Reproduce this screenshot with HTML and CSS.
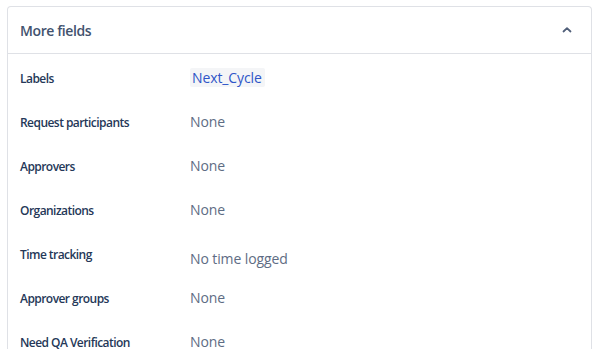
FILE: index.html
```html
<!DOCTYPE html>
<html>
<head>
<meta charset="utf-8">
<link rel="stylesheet" href="styles.css">
</head>
<body>
<div class="card">
  <div class="card-header">
    <span class="title">More fields</span>
    <svg class="chev" width="12" height="12" viewBox="0 0 12 12"><path d="M2.5 7.5 L6 4.2 L9.5 7.5" fill="none" stroke="#505f79" stroke-width="1.8" stroke-linecap="round" stroke-linejoin="round"/></svg>
  </div>
  <div class="fields">
    <div class="row"><div class="label">Labels</div><div class="value"><span class="tag">Next_Cycle</span></div></div>
    <div class="row"><div class="label">Request participants</div><div class="value">None</div></div>
    <div class="row"><div class="label">Approvers</div><div class="value">None</div></div>
    <div class="row"><div class="label">Organizations</div><div class="value">None</div></div>
    <div class="row"><div class="label">Time tracking</div><div class="value shifted">No time logged</div></div>
    <div class="row"><div class="label">Approver groups</div><div class="value">None</div></div>
    <div class="row"><div class="label">Need QA Verification</div><div class="value">None</div></div>
  </div>
</div>
</body>
</html>
```
FILE: styles.css
```css
html, body { margin: 0; padding: 0; background: #fff; }
body {
  padding: 6px 5px 0 7px;
  height: 343px;
  font-family: "Open Sans", "Noto Sans", sans-serif;
  overflow: hidden;
}
.card {
  border: 1px solid #dfe1e6;
  border-bottom: none;
  border-radius: 4px 4px 0 0;
  height: 100%;
  box-sizing: border-box;
  overflow: hidden;
}
.card-header {
  height: 46px;
  border-bottom: 1px solid #dfe1e6;
  display: flex;
  align-items: center;
  justify-content: space-between;
  padding: 0 18px 0 12px;
}
.title {
  font-size: 14px;
  font-weight: 600;
  color: #42526e;
  letter-spacing: -0.4px;
}
.chev { display: block; }
.fields { padding: 2px 0 0 12px; }
.row {
  display: flex;
  align-items: center;
  height: 44px;
}
.label {
  width: 170px;
  font-size: 12px;
  font-weight: 600;
  color: #253858;
  letter-spacing: -0.55px;
}
.value {
  font-size: 14px;
  color: #5e6c84;
  letter-spacing: -0.1px;
  margin-top: -1px;
}
.value.shifted { margin-top: 8px; }
.tag {
  display: inline-block;
  background: #f4f5f7;
  color: #2f55c8;
  padding: 0 3px 0 2px;
  line-height: 19px;
  border-radius: 2px;
}
```
